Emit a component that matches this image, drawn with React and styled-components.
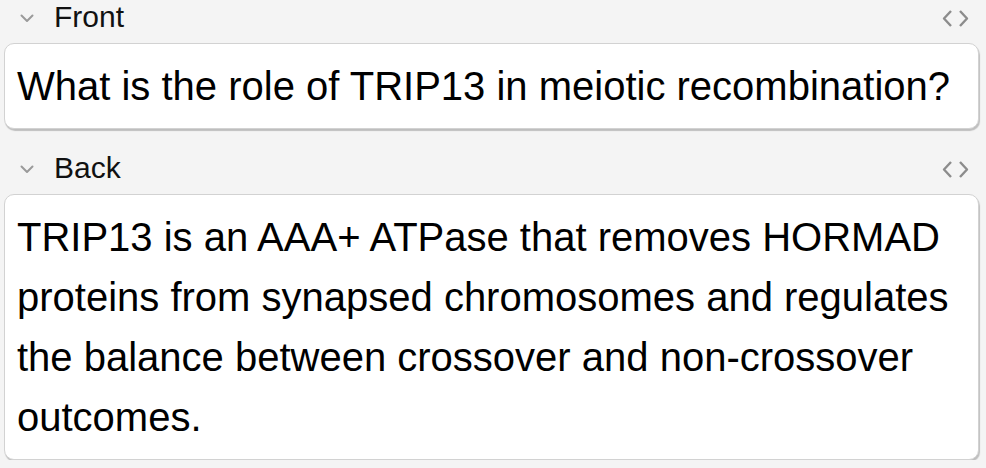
import styled, { createGlobalStyle } from 'styled-components';

const GlobalStyle = createGlobalStyle`
  html, body {
    margin: 0;
    padding: 0;
    background: #f4f4f4;
  }
  body {
    font-family: 'Liberation Sans', Arial, sans-serif;
  }
`;

const Editor = styled.div`
  display: flex;
  flex-direction: column;
  gap: 22px;
  padding: 0 7px 0 4px;
`;

const Field = styled.section`
  display: flex;
  flex-direction: column;
`;

const FieldHeader = styled.div`
  height: 43px;
  display: flex;
  align-items: flex-start;
`;

const Chevron = styled.svg`
  width: 14px;
  height: 9px;
  margin: 14px 0 0 16px;
  flex-shrink: 0;
`;

const Label = styled.span`
  margin-left: 20px;
  font-size: 30px;
  line-height: 33px;
  color: #111;
`;

const CodeToggle = styled.svg`
  margin: 10px 9px 0 auto;
  width: 28px;
  height: 17px;
  flex-shrink: 0;
`;

const Card = styled.div`
  background: #fff;
  border: 1px solid #d2d2d2;
  border-radius: 10px;
  box-shadow: 1px 2px 1px rgba(0, 0, 0, 0.22);
  padding: 12px 12px;
  font-size: 40px;
  line-height: 60px;
  color: #000;
`;

const ChevronIcon = () => (
  <Chevron viewBox="0 0 14 9">
    <path d="M1.5 1.5 L7 7 L12.5 1.5" fill="none" stroke="#9a9a9a" strokeWidth="2" strokeLinecap="round" strokeLinejoin="round" />
  </Chevron>
);

const CodeIcon = () => (
  <CodeToggle viewBox="0 0 28 17">
    <path d="M9 1 L2 8.5 L9 16" fill="none" stroke="#8c8c8c" strokeWidth="2.4" strokeLinejoin="round" />
    <path d="M18 1 L25 8.5 L18 16" fill="none" stroke="#8c8c8c" strokeWidth="2.4" strokeLinejoin="round" />
  </CodeToggle>
);

const fields = [
  { id: 'front', name: 'Front', value: 'What is the role of TRIP13 in meiotic recombination?' },
  {
    id: 'back',
    name: 'Back',
    value:
      'TRIP13 is an AAA+ ATPase that removes HORMAD proteins from synapsed chromosomes and regulates the balance between crossover and non-crossover outcomes.',
  },
];

const App = () => (
  <>
    <GlobalStyle />
    <Editor>
      {fields.map((field) => (
        <Field key={field.id}>
          <FieldHeader>
            <ChevronIcon />
            <Label>{field.name}</Label>
            <CodeIcon />
          </FieldHeader>
          <Card>{field.value}</Card>
        </Field>
      ))}
    </Editor>
  </>
);

export default App;
